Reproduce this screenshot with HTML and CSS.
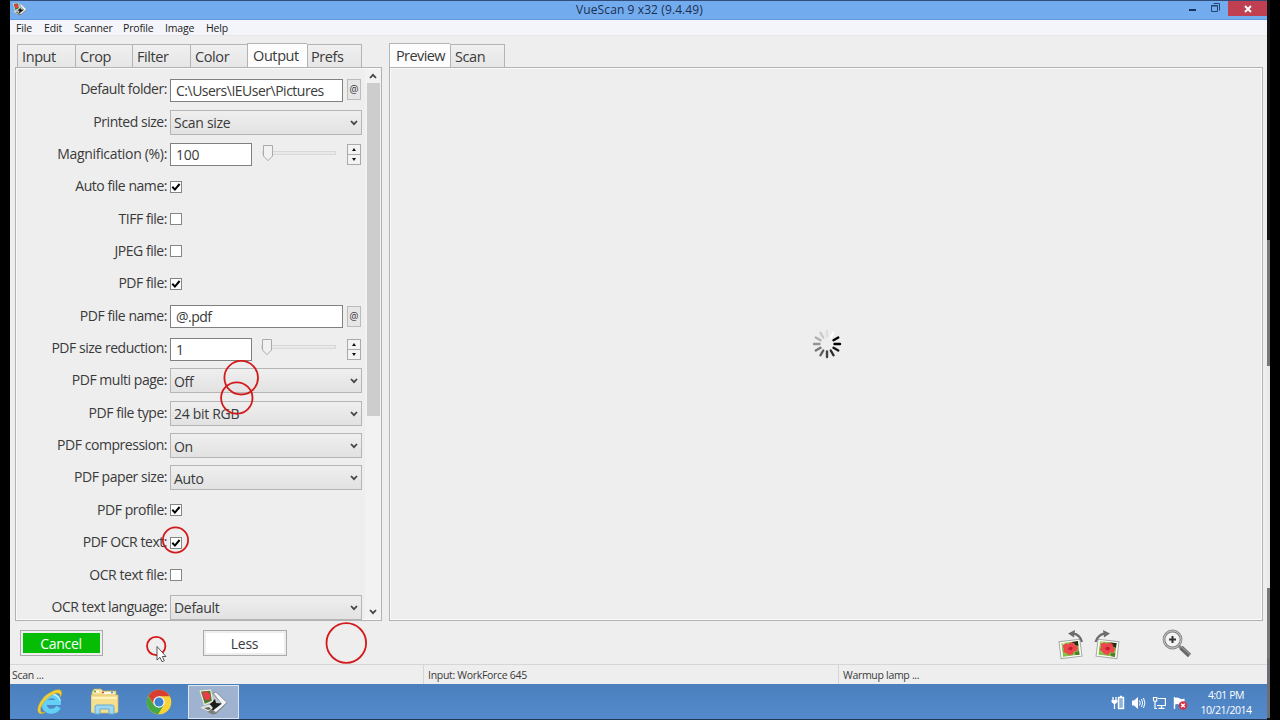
FILE: index.html
```
<!DOCTYPE html>
<html lang="en">
<head>
    <meta charset="UTF-8">
    <meta name="viewport" content="width=device-width, initial-scale=1.0">
    <title>VueScan 9 x32 (9.4.49)</title>
    <link rel="stylesheet" href="styles.css">
</head>
<body>
    <!-- shared shapes -->
    <svg class="defs" width="0" height="0">
        <symbol id="check" viewBox="0 0 10 10"><path d="M1.3 4.8 L3.9 7.6 L8.6 2" fill="none" stroke="#000" stroke-width="2"/></symbol>
        <symbol id="chevron" viewBox="0 0 8 6"><path d="M1 1 L4 4.2 L7 1" fill="none" stroke="#444" stroke-width="1.8"/></symbol>
        <symbol id="thumb" viewBox="0 0 10 17"><path d="M.5 .5 H9.5 V11 L5 15.7 L.5 11 Z" fill="#f1f1f1" stroke="#aaa"/></symbol>
        <symbol id="scanner" viewBox="0 0 30 28">
            <path d="M2 19 L14 26.500 L18 26 L29 15 L26 13 L14 20 Z" fill="#7c807c"/>
            <path d="M15 5 L18 4 L29 14.500 L18 24.500 L14 22 L23 15 Z" fill="#f3f4f5" stroke="#7d8085" stroke-width=".8"/>
            <path d="M14 6 L23 15 L16 20 L12 16 Z" fill="#c3c6c8"/>
            <path d="M10 18 L17 11 L18 15 L24 15.500 L15 22.500 Z" fill="#1c1f19"/>
            <path d="M2 19.500 L12 16.500 L15 20 L10 23.500 Z" fill="#e6eae0"/>
            <path d="M6 20 L11 19 L13 21 L10 22 Z" fill="#5d6657"/>
            <path d="M1.500 2.500 L13 1.500 L15 13.500 L6 17.500 Z" fill="#eef0cf"/>
            <path d="M3 3.500 L12.200 2.700 L13.800 12.700 L6.800 15.800 Z" fill="#4c7534"/>
            <path d="M4.500 4.500 L9 3.500 L12.500 7 L12 11.500 L7.500 12 L5.500 9 Z" fill="#ea3c47"/>
        </symbol>
        <symbol id="flower" viewBox="0 0 17 14">
            <rect width="17" height="14" fill="#86c148"/>
            <path d="M10 0 H17 V5 L14 4 L12 2 Z" fill="#222d12"/>
            <path d="M0 0 H5 L2 2 Z" fill="#d5e8a2"/>
            <path d="M1 3 L4 1 L7 2 L9 .5 L13 1.500 L13.500 4 L16 6 L15 10 L11.500 10 L10 13 L5.500 12.500 L4 10.500 L1 9 L2 6 Z" fill="#f0454e"/>
            <path d="M6 6 L9 4.500 L11 6 L9.500 8.500 L7 8 Z" fill="#bd1f2b"/>
            <path d="M12 11 L17 10 V14 H13 Z" fill="#4f7e2a"/>
        </symbol>
    </svg>

    <div class="screen">
        <header class="titlebar">
            <svg class="app-icon" viewBox="0 0 30 28"><use href="#scanner"/></svg>
            <span class="title">VueScan 9 x32 (9.4.49)</span>
            <div class="window-buttons">
                <svg width="45" height="18" viewBox="0 0 45 18">
                    <path d="M1 9 H8" stroke="#17345c" stroke-width="2"/>
                    <path d="M25.500 2.500 H31.500 V9.500 M23.500 4.500 H29.500 V10.500 H23.500 Z M23 5 H30" fill="none" stroke="#23446f"/>
                </svg>
                <div class="close">
                    <svg width="8" height="8" viewBox="0 0 8 8"><path d="M1 1 L7 7 M7 1 L1 7" stroke="#fff" stroke-width="1.9"/></svg>
                </div>
            </div>
        </header>

        <nav class="menu">
            <span class="m-file">File</span>
            <span class="m-edit">Edit</span>
            <span class="m-scanner">Scanner</span>
            <span class="m-profile">Profile</span>
            <span class="m-image">Image</span>
            <span>Help</span>
        </nav>

        <main class="content">
            <section class="left">
                <div class="tabs">
                    <div class="tab">Input</div>
                    <div class="tab crop">Crop</div>
                    <div class="tab">Filter</div>
                    <div class="tab color">Color</div>
                    <div class="tab active output">Output</div>
                    <div class="tab prefs">Prefs</div>
                </div>
                <div class="panel">
                    <div class="form">
                        <div class="row"><label>Default folder:</label><div class="text wide">C:\Users\IEUser\Pictures</div><div class="at">@</div></div>
                        <div class="row"><label>Printed size:</label><div class="select">Scan size<svg><use href="#chevron"/></svg></div></div>
                        <div class="row">
                            <label class="loose">Magnification (%):</label><div class="text num">100</div>
                            <div class="slider"><svg><use href="#thumb"/></svg></div>
                            <div class="spin"><i class="up"></i><i class="down"></i></div>
                        </div>
                        <div class="row"><label>Auto file name:</label><div class="box"><svg><use href="#check"/></svg></div></div>
                        <div class="row"><label>TIFF file:</label><div class="box"></div></div>
                        <div class="row"><label>JPEG file:</label><div class="box"></div></div>
                        <div class="row"><label>PDF file:</label><div class="box"><svg><use href="#check"/></svg></div></div>
                        <div class="row"><label>PDF file name:</label><div class="text wide">@.pdf</div><div class="at">@</div></div>
                        <div class="row">
                            <label>PDF size reduction:</label><div class="text num">1</div>
                            <div class="slider low"><svg><use href="#thumb"/></svg></div>
                            <div class="spin"><i class="up"></i><i class="down"></i></div>
                        </div>
                        <div class="row"><label>PDF multi page:</label><div class="select">Off<svg><use href="#chevron"/></svg></div></div>
                        <div class="row"><label>PDF file type:</label><div class="select">24 bit RGB<svg><use href="#chevron"/></svg></div></div>
                        <div class="row"><label>PDF compression:</label><div class="select">On<svg><use href="#chevron"/></svg></div></div>
                        <div class="row"><label>PDF paper size:</label><div class="select">Auto<svg><use href="#chevron"/></svg></div></div>
                        <div class="row"><label>PDF profile:</label><div class="box"><svg><use href="#check"/></svg></div></div>
                        <div class="row"><label>PDF OCR text:</label><div class="box"><svg><use href="#check"/></svg></div></div>
                        <div class="row"><label>OCR text file:</label><div class="box"></div></div>
                        <div class="row"><label>OCR text language:</label><div class="select">Default<svg><use href="#chevron"/></svg></div></div>
                    </div>
                    <div class="scrollbar">
                        <svg class="flip"><use href="#chevron"/></svg>
                        <div class="thumb"></div>
                        <svg><use href="#chevron"/></svg>
                    </div>
                </div>
            </section>

            <section class="right">
                <div class="tabs">
                    <div class="tab active preview">Preview</div>
                    <div class="tab scan">Scan</div>
                </div>
                <div class="panel preview-area">
                    <svg class="spinner" viewBox="-15 -15 30 30" stroke-width="2.4" stroke-linecap="round">
                        <path d="M0 -7.500 V-13" stroke="#dedede"/>
                        <path d="M0 -7.500 V-13" stroke="#fff" transform="rotate(30)"/>
                        <path d="M0 -7.500 V-13" stroke="#000" transform="rotate(60)"/>
                        <path d="M0 -7.500 V-13" stroke="#000" transform="rotate(90)"/>
                        <path d="M0 -7.500 V-13" stroke="#171717" transform="rotate(120)"/>
                        <path d="M0 -7.500 V-13" stroke="#2c2c2c" transform="rotate(150)"/>
                        <path d="M0 -7.500 V-13" stroke="#444" transform="rotate(180)"/>
                        <path d="M0 -7.500 V-13" stroke="#5c5c5c" transform="rotate(210)"/>
                        <path d="M0 -7.500 V-13" stroke="#777" transform="rotate(240)"/>
                        <path d="M0 -7.500 V-13" stroke="#949494" transform="rotate(270)"/>
                        <path d="M0 -7.500 V-13" stroke="#afafaf" transform="rotate(300)"/>
                        <path d="M0 -7.500 V-13" stroke="#c8c8c8" transform="rotate(330)"/>
                    </svg>
                </div>
            </section>
        </main>

        <div class="actions">
            <div class="button cancel"><span>Cancel</span></div>
            <div class="button less"><span>Less</span></div>
            <div class="tools">
                <svg width="26" height="30" viewBox="0 0 26 30">
                    <g transform="rotate(-7 12 19)">
                        <rect x="2" y="10.500" width="21" height="17" fill="#fdfdfb" stroke="#a4a9a4"/>
                        <use href="#flower" x="4" y="12" width="17" height="14"/>
                    </g>
                    <path d="M24 12 Q22 5 16 3.700" fill="none" stroke="#6c6c6c" stroke-width="2.2"/>
                    <path d="M10 3.500 L17 0 L16 7.500 Z" fill="#6c6c6c"/>
                </svg>
                <svg class="rotate-right" width="26" height="30" viewBox="0 0 26 30">
                    <g transform="rotate(7 14 19)">
                        <rect x="3" y="10.500" width="21" height="17" fill="#fdfdfb" stroke="#a4a9a4"/>
                        <use href="#flower" x="5" y="12" width="17" height="14"/>
                    </g>
                    <path d="M1.500 12 Q4 5 10 3.700" fill="none" stroke="#6c6c6c" stroke-width="2.2"/>
                    <path d="M16 3.500 L9 0 L10 7.500 Z" fill="#6c6c6c"/>
                </svg>
                <svg class="magnifier" width="30" height="30" viewBox="0 0 30 30">
                    <path d="M16 16 L20 20" stroke="#888" stroke-width="3"/>
                    <path d="M19 18.500 L27.500 26.500" stroke="#666" stroke-width="4.500"/>
                    <path d="M19.500 18 L28 25.500" stroke="#949494" stroke-width="1.200"/>
                    <circle cx="10.500" cy="10.500" r="8.500" fill="#f3f3f3" stroke="#858585" stroke-width="2.800"/>
                    <circle cx="10.500" cy="10.500" r="8.600" fill="none" stroke="#c8c8c8" stroke-width="1"/>
                    <path d="M7 10.500 H14 M10.500 7 V14" stroke="#333" stroke-width="2"/>
                </svg>
            </div>
        </div>

        <footer class="status">
            <span>Scan ...</span>
            <span>Input: WorkForce 645</span>
            <span>Warmup lamp ...</span>
        </footer>

        <div class="taskbar">
            <div class="task">
                <svg width="28" height="28" viewBox="0 0 28 28">
                    <path d="M22.500 19 C20 23.500 14.500 24.500 11 22 C6.500 18.500 7.500 10.500 12.500 8.500 C18 6 22.500 9.500 22.500 14.500 L9 14.500" fill="none" stroke="#63d1f5" stroke-width="5"/>
                    <path d="M11 7.500 C16 4.500 23 7 24 13" fill="none" stroke="#c4f2ff" stroke-width="1.200"/>
                    <path d="M4 25.500 C-1 24 3 12 12 6 C19 1 26 0 25.500 5 C25.300 7 25 8 24 9 C25 4 20 4 14 8 C7 13 3 21 5 24 C6 25 8 24.500 10 23.500 C8 25 6 26 4 25.500 Z" fill="#f5cf36" stroke="#d5a91d" stroke-width=".5"/>
                </svg>
            </div>
            <div class="task">
                <svg width="28" height="28" viewBox="0 0 28 28">
                    <path d="M1 4 L3 1 H10 L12 3 H25 V10 H1 Z" fill="#f4e6a0" stroke="#c9a94f" stroke-width=".7"/>
                    <path d="M4 3.500 H8 M12 5 H23" stroke="#fff" stroke-width="1.500"/>
                    <path d="M3 3.500 H5" stroke="#4ba84a" stroke-width="1.500"/>
                    <path d="M11 4.500 H13" stroke="#d74436" stroke-width="1.500"/>
                    <path d="M20 4.500 H22" stroke="#3e8fd0" stroke-width="1.500"/>
                    <path d="M0 7 H27 V24 L25 25 H2 L0 24 Z" fill="#f6df8f" stroke="#dcbc60" stroke-width=".7"/>
                    <path d="M1 10 H26" stroke="#fff2bd" stroke-width="2"/>
                    <path d="M4 26 V19 Q4 17 6 17 H21 Q23 17 23 19 V26 H18 V21 H9 V26 Z" fill="#9ed7f0" stroke="#65add5"/>
                </svg>
            </div>
            <div class="task">
                <svg width="26" height="26" viewBox="-13 -13 26 26">
                    <circle r="12.300" fill="#fcd336"/>
                    <path d="M-10.650 -6.150 A12.300 12.300 0 0 0 -1 12.260 L5 3 L0 0 L-5.500 2.500 Z" fill="#45a844"/>
                    <path d="M0 -5.800 H10.850 A12.300 12.300 0 0 0 -10.650 -6.150 L-5 2.500 Z" fill="#d93e32"/>
                    <circle r="5.800" fill="#f5f5f5"/>
                    <circle r="4.500" fill="#3f83d0"/>
                </svg>
            </div>
            <div class="task current">
                <svg width="30" height="28" viewBox="0 0 30 28"><use href="#scanner"/></svg>
            </div>
            <div class="tray">
                <!-- power, sound, network, action center -->
                <svg width="14" height="16" viewBox="0 0 14 16" fill="none" stroke="#fff">
                    <rect x="7.500" y="2.500" width="5" height="11" fill="#8fb2dc" stroke-width="1.400"/>
                    <path d="M9 1.500 H11" stroke-width="1.500"/>
                    <path d="M2 2 V5 M5 2 V5 M3.500 8 V14" stroke-width="1.300"/>
                    <path d="M.5 5 H6.500 V7 Q5 9 3.500 9 Q2 9 .5 7 Z" fill="#fff" stroke="none"/>
                </svg>
                <svg width="15" height="16" viewBox="0 0 15 16" fill="none" stroke="#fff">
                    <path d="M1 5.500 H3 L7 2 V14 L3 10.500 H1 Z" fill="#fff" stroke="none"/>
                    <path d="M8.500 5.500 Q10 8 8.500 10.500 M10.500 4 Q12.800 8 10.500 12 M12.500 3 Q15.300 8 12.500 13" stroke-width="1"/>
                </svg>
                <svg width="15" height="16" viewBox="0 0 15 16" fill="none" stroke="#fff" stroke-width="1.200">
                    <path d="M6 3.500 H13.400 V10.500 H5"/>
                    <path d="M9.500 11 V13 M6.500 13.400 H12.500"/>
                    <path d="M1.500 2.500 H4.800 V5.500 Q3 7.500 1.500 5.500 Z M3 7 V13.500 H5"/>
                </svg>
                <svg width="15" height="16" viewBox="0 0 15 16">
                    <path d="M1.500 2 V14" stroke="#fff" stroke-width="1.400"/>
                    <path d="M2 3 Q4 2 6 3 Q8 5 11.500 3.500 V10 Q8 11 6 9.500 Q4 8.500 2 9.500 Z" fill="#fff"/>
                    <circle cx="10" cy="10.500" r="4.300" fill="#d33245"/>
                    <path d="M8.200 8.700 L11.800 12.300 M11.800 8.700 L8.200 12.300" stroke="#fff" stroke-width="1.400"/>
                </svg>
            </div>
            <div class="clock"><span class="time">4:01 PM</span><span>10/21/2014</span></div>
        </div>
    </div>
    <div class="edge"><i class="e1"></i><i class="e2"></i><i class="e3"></i><i class="e4"></i></div>

    <!-- click rings and mouse pointer lie over the desktop -->
    <svg class="overlay" width="400" height="720" viewBox="0 0 400 720">
        <g fill="none" stroke="#d31a1a" stroke-width="1.800">
            <circle cx="241.200" cy="377.700" r="16.800"/>
            <circle cx="236.800" cy="398" r="15.700"/>
            <circle cx="175.500" cy="540" r="12.600"/>
            <circle cx="156.200" cy="646" r="9.200"/>
            <circle cx="346.300" cy="643" r="19.800"/>
        </g>
        <path d="M157 646.500 V660 L160 657.300 L162 661.700 L164.300 660.700 L162.300 656.500 H166 Z" fill="#fff" stroke="#444" stroke-width=".9"/>
    </svg>
</body>
</html>
```
FILE: styles.css
```
* {
    box-sizing: border-box;
}

body {
    margin: 0;
    width: 1280px;
    height: 720px;
    overflow: hidden;
    background-color: #000;
    color: #3a3a3a;
    font-family: "Open Sans", "Noto Sans", sans-serif;
    font-size: 14px;
    letter-spacing: -0.3px;
    white-space: nowrap;
    display: flex;
    padding-left: 10px;
    position: relative;
}

svg {
    display: block;
    flex-shrink: 0;
}

.defs {
    position: absolute;
}

.screen {
    width: 1257px;
    height: 720px;
    display: flex;
    flex-direction: column;
    background-color: #eee;
}

.titlebar {
    height: 20px;
    flex-shrink: 0;
    background-color: #73abef;
    border-top: 1px solid #314c78;
    border-bottom: 1px solid #6399df;
    display: grid;
    grid-template-columns: 1fr auto 1fr;
    font-size: 12px;
    letter-spacing: 0.1px;
    line-height: 18px;
    color: #1b304e;
}

.app-icon {
    width: 15px;
    height: 14px;
    margin: 1px 0 0 2px;
}

.title {
    padding-left: 2px;
}

.window-buttons {
    display: flex;
    justify-content: flex-end;
}

.window-buttons > svg {
    margin-right: -5px;
}

.close {
    width: 39px;
    height: 15px;
    background-color: #c03f50;
    display: flex;
    align-items: center;
    justify-content: center;
}

.menu {
    height: 16px;
    flex-shrink: 0;
    background-color: #f3f5fa;
    border-bottom: 1px solid #e6e6e8;
    padding-left: 6px;
    display: flex;
    font-size: 10.5px;
    letter-spacing: -0.15px;
    line-height: 17px;
    color: #222;
}

.m-file { width: 28px; }
.m-edit { width: 30px; }
.m-scanner { width: 49px; }
.m-profile { width: 42px; }
.m-image { width: 41px; }

.content {
    height: 585px;
    flex-shrink: 0;
    display: flex;
    gap: 7px;
    padding: 7px 4px 0 5px;
}

.left {
    width: 367px;
    display: flex;
    flex-direction: column;
}

.right {
    flex: 1;
    display: flex;
    flex-direction: column;
}

.tabs {
    height: 25px;
    display: flex;
    align-items: flex-end;
    margin-bottom: -1px;
}

.left .tabs {
    padding-left: 2px;
}

.tab {
    width: 58px;
    height: 24px;
    padding-left: 4px;
    border: 1px solid #b4b4b4;
    border-right: none;
    background-color: #ebebeb;
    background-image: linear-gradient(#f0f0f0, #e6e6e6);
    line-height: 24px;
    font-size: 14.5px;
    letter-spacing: -0.4px;
}

.tab.crop,
.tab.color {
    width: 57px;
}

.tab.active {
    height: 25px;
    padding-left: 5px;
    background: #fdfdfd;
    border-bottom: none;
    line-height: 23px;
    letter-spacing: -0.4px;
}

.tab.output { width: 60px; }

.tab.preview {
    width: 61px;
    padding-left: 6px;
    letter-spacing: -0.6px;
}

.tab.prefs,
.tab.scan {
    width: 55px;
    border-right: 1px solid #b4b4b4;
}

.tab.prefs {
    padding-left: 3px;
}

.panel {
    flex: 1;
    border: 1px solid #b2b2b2;
    box-shadow: inset 0 0 0 1px #fafafa;
    display: flex;
    overflow: hidden;
}

.form {
    width: 346px;
    padding-top: 5px;
}

.row {
    height: 32.36px;
    display: flex;
    align-items: center;
}

label {
    width: 151px;
    margin: -1px 3px 0 0;
    text-align: right;
    flex-shrink: 0;
    letter-spacing: -0.46px;
}

label.loose {
    letter-spacing: -0.32px;
}

.text {
    height: 23px;
    margin-top: 2px;
    padding-left: 5px;
    border: 1px solid #808080;
    background-color: #fff;
    line-height: 22px;
}

.text.wide {
    width: 173px;
    margin-right: 4px;
    letter-spacing: -0.5px;
}

.text.num {
    width: 82px;
}

.at {
    width: 14px;
    height: 21px;
    margin-top: 1px;
    border: 1px solid #bbb;
    background-color: #e6e6e6;
    font-size: 10px;
    line-height: 19px;
    letter-spacing: 0;
    display: flex;
    justify-content: center;
}

.select {
    width: 192px;
    height: 25px;
    margin-top: 1px;
    padding: 1px 3px 0;
    border: 1px solid #b5b5b5;
    background-image: linear-gradient(#efefef, #e2e2e2);
    display: flex;
    align-items: center;
    justify-content: space-between;
    line-height: 25px;
}

.select svg,
.scrollbar svg {
    width: 8px;
    height: 6px;
}

.slider {
    width: 74px;
    height: 4px;
    margin: -2px 11px 0 10px;
    border: 1px solid #d8d8d8;
    background-color: #e9e9e9;
    display: flex;
    align-items: center;
}

.slider.low {
    width: 75px;
    margin-left: 9px;
}

.slider svg {
    width: 10px;
    height: 17px;
    margin-top: 1px;
}

.spin {
    width: 14px;
    height: 21px;
    margin-top: 2px;
    border: 1px solid #aaa;
    background: linear-gradient(#f3f3f3 9px, #aaa 9px, #aaa 10px, #f3f3f3 10px);
    display: flex;
    flex-direction: column;
    align-items: center;
    justify-content: space-between;
    padding: 3px 0;
}

.spin i {
    border-left: 2px solid transparent;
    border-right: 2px solid transparent;
}

.up { border-bottom: 3px solid #111; }
.down { border-top: 3px solid #111; }

.box {
    width: 12px;
    height: 12px;
    margin-top: 1px;
    border: 1px solid #858585;
    background-color: #fff;
}

.box svg {
    width: 10px;
    height: 10px;
}

.scrollbar {
    width: 16px;
    margin: 1px 1px 1px 3px;
    background-color: #f2f2f2;
    display: flex;
    flex-direction: column;
    align-items: center;
    flex-shrink: 0;
    padding: 4px 0;
}

.scrollbar .thumb {
    width: 13px;
    height: 333px;
    margin: 4px 0 auto;
    background-color: #cdcdcd;
}

.scrollbar .flip {
    transform: rotate(180deg);
}

.preview-area {
    align-items: center;
    justify-content: center;
}

.spinner {
    width: 30px;
    height: 30px;
    margin-left: 2px;
}

.actions {
    height: 43px;
    flex-shrink: 0;
    display: flex;
    padding: 9px 75px 0 10px;
}

.button {
    width: 83px;
    height: 26px;
    border: 1px solid #aaa;
    padding: 2px;
    text-align: center;
    line-height: 21px;
}

.button span {
    display: block;
    height: 20px;
    background-color: #fff;
}

.cancel span {
    padding-right: 1px;
    background-color: #06bd06;
    color: #fff;
}

.less {
    width: 84px;
    margin-left: 100px;
}

.less span {
    padding-right: 1px;
}

.tools {
    margin-left: auto;
    display: flex;
}

.rotate-right {
    margin-left: 10px;
}

.magnifier {
    margin-left: 42px;
    margin-top: -1px;
}

.status {
    height: 20px;
    flex-shrink: 0;
    border-top: 1px solid #d6d6d6;
    display: grid;
    grid-template-columns: 413px 415px 1fr;
    font-size: 10.5px;
    letter-spacing: -0.3px;
    line-height: 20px;
}

.status span {
    padding-left: 4px;
    border-left: 1px solid #d6d6d6;
}

.status span:first-child {
    padding-left: 2px;
    border-left: none;
}

.taskbar {
    flex: 1;
    display: flex;
    align-items: center;
    padding: 0 15px 0 13px;
    border-bottom: 1px solid #203756;
    background-color: #5087c6;
    background-image: linear-gradient(#4b80bd, #538acb);
    color: #fff;
}

.task {
    width: 54.5px;
    height: 35px;
    display: flex;
    align-items: center;
    justify-content: center;
}

.task.current {
    width: 51px;
    height: 34px;
    margin-left: 1px;
    border: 1px solid #dce6f2;
    background-color: #9fb3d1;
}

.tray {
    margin-left: auto;
    display: flex;
    gap: 6px;
    padding-top: 2px;
}

.clock {
    width: 52px;
    margin-left: 12px;
    display: flex;
    flex-direction: column;
    text-align: center;
    font-size: 10.5px;
    letter-spacing: -0.45px;
    line-height: 15px;
    padding-top: 2px;
}

/* strip of the next window along the right side */
.edge {
    width: 3px;
    padding-top: 240px;
    background-color: #111;
}

.edge i {
    display: block;
    background-color: #777;
}

.edge .e1 { height: 126px; }
.edge .e2 { height: 222px; background-color: #e8ebe6; }
.edge .e3 { height: 71px; }
.edge .e4 { height: 59px; background-color: #6b6f75; }

.overlay {
    position: absolute;
    left: 0;
    top: 0;
}
```
